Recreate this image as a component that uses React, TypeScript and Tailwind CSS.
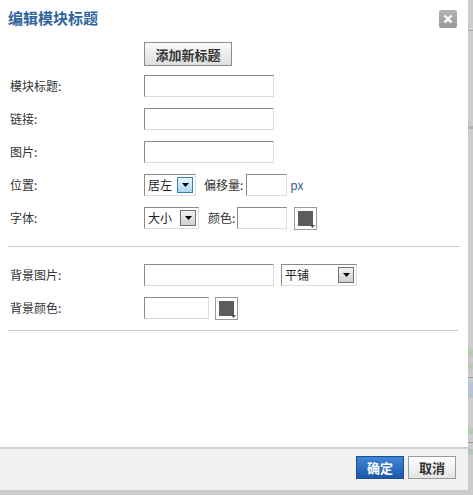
import type { ReactNode } from 'react';

const font = { fontFamily: '"Noto Sans CJK SC", "DejaVu Sans", sans-serif' };

// Plain text box with an inset look
function TextBox({ w }: { w: string }) {
  return (
    <div
      className={`${w} h-[22px] bg-white border border-t-[#8a8a8a] border-l-[#8a8a8a] border-r-[#dcdcdc] border-b-[#dcdcdc]`}
    />
  );
}

function Arrow({ active }: { active?: boolean }) {
  return (
    <div
      className={
        active
          ? 'w-[16px] h-[16px] border border-[#3c7fb1] bg-gradient-to-b from-[#eaf6fd] to-[#a7d8f4] flex items-center justify-center'
          : 'w-[16px] h-[16px] border border-[#707070] bg-gradient-to-b from-[#f2f2f2] to-[#cfcfcf] flex items-center justify-center'
      }
    >
      <svg width="7" height="4" viewBox="0 0 7 4">
        <path d="M0 0h7L3.5 4z" fill="#000" />
      </svg>
    </div>
  );
}

function Select({ w, label, active }: { w: string; label: string; active?: boolean }) {
  return (
    <div
      className={`${w} h-[22px] bg-white border border-t-[#8a8a8a] border-l-[#8a8a8a] border-r-[#dcdcdc] border-b-[#dcdcdc] flex items-center justify-between pl-[3px] pr-[2px] text-[12px] text-[#222]`}
    >
      <span>{label}</span>
      <Arrow active={active} />
    </div>
  );
}

function Swatch() {
  return (
    <div className="relative w-[23px] h-[23px] border border-[#9a9a9a] bg-white">
      <div className="absolute left-[3px] top-[3px] w-[15px] h-[15px] bg-[#5c5c5c]" />
      <svg className="absolute right-[1px] bottom-[1px]" width="5" height="3" viewBox="0 0 5 3">
        <path d="M0 0h5L2.5 3z" fill="#555" />
      </svg>
    </div>
  );
}

function Row({ label, children }: { label: string; children: ReactNode }) {
  return (
    <div className="flex items-center h-[22px]">
      <div className="w-[144px] pl-[10px] text-[12px] text-[#333]">{label}</div>
      <div className="flex items-center">{children}</div>
    </div>
  );
}

export default function App() {
  return (
    <div className="w-[473px] h-[495px] bg-[#cccccc] overflow-hidden" style={font}>
      <div className="flex h-[490px]">
        <div className="w-[468px] h-full bg-white flex flex-col">
          {/* Header */}
          <div className="h-[42px] shrink-0 flex justify-between items-start pl-[8px] pr-[11px] pt-[8px]">
            <h2 className="text-[15px] leading-[20px] font-bold text-[#2f649f]">编辑模块标题</h2>
            <button className="mt-[2px] w-[18px] h-[18px] rounded-[2px] bg-gradient-to-b from-[#b4b4b4] to-[#999] flex items-center justify-center">
              <svg width="10" height="10" viewBox="0 0 10 10">
                <path d="M1.5 1.5l7 7M8.5 1.5l-7 7" stroke="#fff" strokeWidth="2.4" />
              </svg>
            </button>
          </div>

          {/* Add title button */}
          <div className="pl-[144px] h-[24px] shrink-0 flex">
            <button className="w-[88px] h-[24px] border border-[#8c8c8c] bg-gradient-to-b from-[#fafafa] to-[#dedede] text-[13px] font-bold text-[#333] leading-none">
              添加新标题
            </button>
          </div>

          {/* Form */}
          <div className="mt-[9px] flex flex-col gap-[11px]">
            <Row label="模块标题:">
              <TextBox w="w-[130px]" />
            </Row>
            <Row label="链接:">
              <TextBox w="w-[130px]" />
            </Row>
            <Row label="图片:">
              <TextBox w="w-[130px]" />
            </Row>
            <Row label="位置:">
              <Select w="w-[52px]" label="居左" active />
              <span className="ml-[8px] mr-[3px] text-[12px] text-[#333]">偏移量:</span>
              <TextBox w="w-[41px]" />
              <span className="ml-[3px] text-[12px] text-[#3b5f94]">px</span>
            </Row>
            <Row label="字体:">
              <Select w="w-[55px]" label="大小" />
              <span className="ml-[9px] mr-[2px] text-[12px] text-[#333]">颜色:</span>
              <TextBox w="w-[50px]" />
              <div className="ml-[7px]">
                <Swatch />
              </div>
            </Row>
          </div>

          <div className="mt-[17px] mx-[8px] border-t border-[#cccccc]" />

          <div className="mt-[17px] flex flex-col gap-[11px]">
            <Row label="背景图片:">
              <TextBox w="w-[130px]" />
              <div className="ml-[7px]">
                <Select w="w-[76px]" label="平铺" />
              </div>
            </Row>
            <Row label="背景颜色:">
              <TextBox w="w-[65px]" />
              <div className="ml-[6px]">
                <Swatch />
              </div>
            </Row>
          </div>

          <div className="mt-[11px] ml-[8px] mr-[10px] border-t border-[#cccccc]" />

          <div className="flex-1" />

          {/* Footer */}
          <div className="h-[43px] shrink-0 border-t-2 border-[#cfcfcf] bg-[#f1f1f1] flex justify-end items-start pt-[7px] pr-[12px] gap-[4px]">
            <button className="w-[48px] h-[23px] border border-[#1d4f8f] bg-gradient-to-b from-[#4186d6] to-[#1b58a8] text-[13px] font-bold text-white leading-none">
              确定
            </button>
            <button className="w-[48px] h-[23px] border border-[#9a9a9a] bg-gradient-to-b from-[#ffffff] to-[#e4e4e4] text-[13px] font-bold text-[#333] leading-none">
              取消
            </button>
          </div>
        </div>

        {/* Page behind the dialog */}
        <div className="flex-1 bg-[#cccccc] flex flex-col">
          <div className="mt-[30px] h-px bg-[#a8a8a8]" />
          <div className="mt-[95px] h-[3px] bg-[#b0b0b0]" />
          <div className="mt-[220px] h-[8px] bg-[#b6c9b6]" />
          <div className="mt-[6px] h-[6px] bg-[#b6c9b6]" />
          <div className="mt-[8px] h-px bg-[#9a9a9a]" />
          <div className="mt-[4px] h-[16px] bg-[#b8c4d2]" />
          <div className="mt-[30px] h-[6px] bg-[#b6c9b6]" />
          <div className="mt-[8px] h-px bg-[#9a9a9a]" />
          <div className="mt-[6px] h-[6px] bg-[#b6c9b6]" />
        </div>
      </div>
    </div>
  );
}
